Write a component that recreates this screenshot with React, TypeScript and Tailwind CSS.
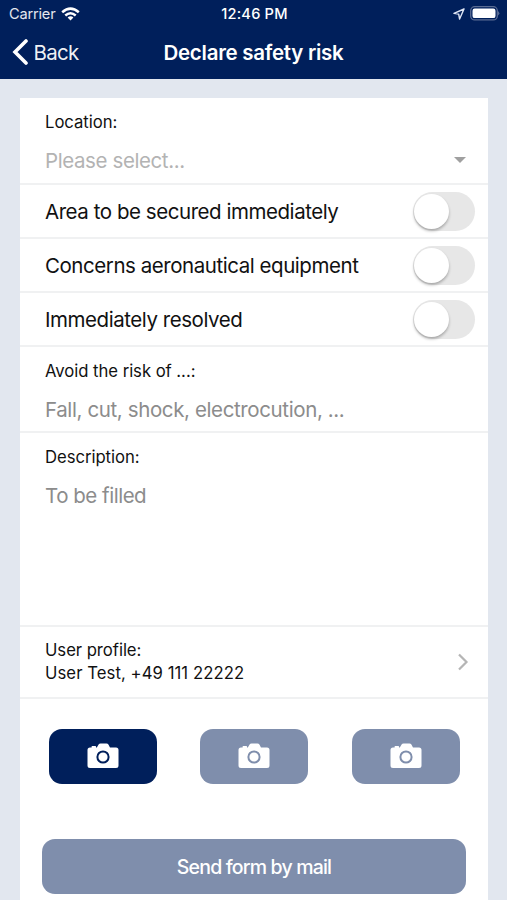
import type { ReactNode } from "react";

function StatusBar() {
  return (
    <div className="flex h-[28px] items-center justify-between pl-[9px] pr-[7px] text-[14.6px] leading-none">
      <div className="flex w-[160px] items-center gap-[6px]">
        <span className="tracking-[-0.2px] text-white/90">Carrier</span>
        <svg width="19" height="14" viewBox="0 0 19 14" fill="none" stroke="#fff" strokeWidth="2.5" className="-mt-px">
          <path d="M1.2 5.3Q9.5 -2 17.8 5.3" />
          <path d="M4.3 8.5Q9.5 3.9 14.7 8.5" />
          <path d="M6.6 10.5Q9.5 8.2 12.4 10.5L9.5 13.6Z" fill="#fff" stroke="none" />
        </svg>
      </div>
      <span className="font-medium tracking-[0.2px]">12:46 PM</span>
      <div className="-mt-px flex w-[160px] items-center justify-end gap-[5px]">
        <svg width="12" height="12" viewBox="0 0 12 12" fill="none" stroke="#dfe6f5" strokeWidth="1.4" strokeLinejoin="round">
          <path d="M11 1L1 5.4L5.7 6.1L6.6 11Z" />
        </svg>
        <svg width="30" height="15" viewBox="0 0 30 15">
          <rect x="0.7" y="0.7" width="26.6" height="13.2" rx="4" fill="none" stroke="#5a6c93" strokeWidth="1.3" />
          <rect x="2.5" y="2.5" width="23" height="9.6" rx="2.2" fill="#fff" />
          <path d="M28.3 5Q30.2 7.3 28.3 9.6Z" fill="#7f8fae" />
        </svg>
      </div>
    </div>
  );
}

function Header() {
  return (
    <header className="h-[79px] shrink-0 bg-[#001f5b] text-white">
      <StatusBar />
      <div className="grid h-[49px] grid-cols-[150px_1fr_150px] items-center">
        <div className="flex items-center gap-[5.5px] pl-[12px]">
          <svg width="16" height="26" viewBox="0 0 16 26" fill="none" stroke="#fff" strokeWidth="3.6" strokeLinecap="round" className="-mt-px">
            <path d="M14 2L3 13L14 24" strokeLinejoin="miter" />
          </svg>
          <span className="pt-px text-[20.5px] tracking-[-0.7px] text-white/95">Back</span>
        </div>
        <h1 className="whitespace-nowrap pt-px text-center text-[20.5px] font-semibold tracking-[-0.27px]">Declare safety risk</h1>
      </div>
    </header>
  );
}

function Field({ label, children, className }: { label: string; children: ReactNode; className: string }) {
  return (
    <div className={`flex flex-col border-b-2 border-[#f0f1f2] pl-[25px] pt-[12.5px] ${className}`}>
      <span className="text-[16.7px] leading-[23px] tracking-[-0.05px]">{label}</span>
      {children}
    </div>
  );
}

function ToggleRow({ children }: { children: ReactNode }) {
  return (
    <div className="flex h-[54px] items-center justify-between border-b-2 border-[#f0f1f2] pl-[25px] pr-[13px] pt-px">
      <span className="pt-px text-[20.5px] tracking-[-0.45px]">{children}</span>
      <div className="flex h-[39px] w-[62px] rounded-full bg-[#e7e7e7] pl-px pt-[1.5px]">
        <div className="size-[35px] rounded-full bg-white shadow-[0_2px_3px_rgba(0,0,0,0.28)]" />
      </div>
    </div>
  );
}

function PhotoButton({ active = false }: { active?: boolean }) {
  const bg = active ? "bg-[#001f5b]" : "bg-[#7f8eac]";
  const ring = active ? "#001f5b" : "#7f8eac";
  return (
    <div className={`flex h-[55px] w-[108px] items-center justify-center rounded-[13px] pb-[2px] ${bg}`}>
      <svg width="32" height="26" viewBox="0 0 32 26">
        <path
          d="M3 4.5H4.6V3.5Q4.6 3 5.2 3H8.4Q9 3 9 3.5V4.5H9.8L11.6 1.6Q12.2 0.5 13.5 0.5H19.5Q20.8 0.5 21.4 1.6L23 4.5H29Q31.5 4.5 31.5 7V22.5Q31.5 25 29 25H3Q0.5 25 0.5 22.5V7Q0.5 4.5 3 4.5Z"
          fill="#fff"
        />
        <circle cx="16" cy="14" r="5.6" fill="none" stroke={ring} strokeWidth="2" />
      </svg>
    </div>
  );
}

export default function App() {
  return (
    <div className="flex h-[900px] w-[507px] flex-col overflow-hidden bg-[#e2e7ef] font-['Inter','Liberation_Sans',sans-serif] text-[#111]">
      <Header />
      <main className="ml-[20px] mr-[19px] mt-[19px] flex flex-1 flex-col bg-white">
        <Field label="Location:" className="h-[87px]">
          <div className="mt-[12.5px] flex items-center justify-between pr-[21px]">
            <span className="text-[20.5px] leading-[30px] tracking-[-0.4px] text-[#b3b3b3]">Please select...</span>
            <svg width="14" height="7" viewBox="0 0 14 7" className="-mt-px">
              <path d="M1 0H13L7 6Z" fill="#a0a0a0" />
            </svg>
          </div>
        </Field>
        <ToggleRow>Area to be secured immediately</ToggleRow>
        <ToggleRow>Concerns aeronautical equipment</ToggleRow>
        <ToggleRow>Immediately resolved</ToggleRow>
        <Field label="Avoid the risk of ...:" className="h-[86px]">
          <span className="mt-[12.5px] text-[20.5px] leading-[30px] tracking-[-0.38px] text-[#8c8c8c]">
            Fall, cut, shock, electrocution, ...
          </span>
        </Field>
        <Field label="Description:" className="h-[194px]">
          <span className="mt-[12.5px] text-[20.5px] leading-[30px] tracking-[-0.48px] text-[#8c8c8c]">To be filled</span>
        </Field>
        <div className="flex h-[72px] items-center justify-between border-b-2 border-[#f0f1f2] pl-[25px] pr-[19px]">
          <div className="flex flex-col text-[16.7px] leading-[23px]">
            <span className="tracking-[-0.05px]">User profile:</span>
            <span className="tracking-[0.06px]">User Test, +49 111 22222</span>
          </div>
          <svg width="12" height="18" viewBox="0 0 12 18" fill="none" stroke="#b5b5b5" strokeWidth="2.2">
            <path d="M2 1.5L9.5 9L2 16.5" />
          </svg>
        </div>
        <div className="mt-[30px] flex justify-between pl-[28.5px] pr-[28.5px]">
          <PhotoButton active />
          <PhotoButton />
          <PhotoButton />
        </div>
        <button className="ml-[22px] mt-[55px] h-[55px] w-[424px] rounded-[13px] bg-[#7f8eac] pt-[2px] text-[19.5px] font-medium tracking-[-0.82px] text-white">
          Send form by mail
        </button>
      </main>
    </div>
  );
}
